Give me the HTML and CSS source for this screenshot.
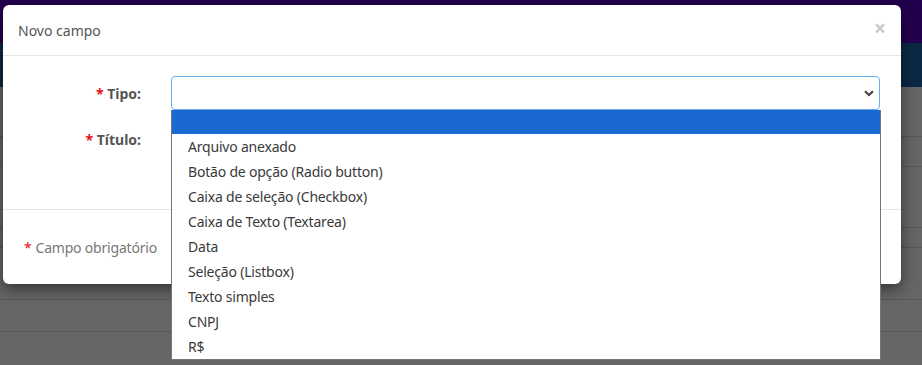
FILE: index.html
```html
<html>
  <head>
    <link rel="stylesheet" href="styles.css">
  </head>
  <body>
    <div class="page">
      <div class="topbar"></div>
      <div class="navbar"></div>
      <div class="rows">
        <div class="row r1"></div>
        <div class="row r2"></div>
        <div class="row r3"></div>
        <div class="row r4"></div>
        <div class="row r5"></div>
        <div class="row r6"></div>
      </div>
    </div>

    <div class="modal">
      <div class="modal-header">
        <span class="modal-title">Novo campo</span>
        <span class="close">&times;</span>
      </div>
      <div class="modal-body">
        <div class="form-row">
          <label class="form-label"><span class="req">*</span> Tipo:</label>
          <div class="select focused">
            <svg class="chevron" width="10" height="7" viewBox="0 0 10 7"><path d="M1 1.2 L5 5 L9 1.2" fill="none" stroke="#444" stroke-width="2.2"/></svg>
          </div>
        </div>
        <div class="form-row">
          <label class="form-label"><span class="req">*</span> Título:</label>
          <div class="select"></div>
        </div>
      </div>
      <div class="modal-footer">
        <span class="req">*</span> Campo obrigatório
      </div>
    </div>

    <ul class="dropdown">
      <li class="selected"></li>
      <li>Arquivo anexado</li>
      <li>Botão de opção (Radio button)</li>
      <li>Caixa de seleção (Checkbox)</li>
      <li>Caixa de Texto (Textarea)</li>
      <li>Data</li>
      <li>Seleção (Listbox)</li>
      <li>Texto simples</li>
      <li>CNPJ</li>
      <li>R$</li>
    </ul>
  </body>
</html>
```

FILE: styles.css
```css
html, body {
  margin: 0;
  width: 100%;
  height: 100%;
  font-family: 'Noto Sans', 'Open Sans', sans-serif;
  overflow: hidden;
}

.page {
  height: 100%;
  background: #666;
}
.topbar {
  height: 43px;
  background: #22004e;
}
.navbar {
  height: 44px;
  background: #0b2944;
}
.row {
  border-bottom: 1px solid #575757;
}
.r1 { height: 49px; }
.r2 { height: 29px; }
.r3 { height: 60px; }
.r4 { height: 19px; }
.r5 { height: 51px; }
.r6 { height: 31px; }

.modal {
  position: absolute;
  left: 3px;
  top: 5px;
  width: 898px;
  background: #fff;
  border-radius: 6px;
  box-shadow: 0 5px 15px rgba(0,0,0,0.5);
}

.modal-header {
  height: 50px;
  padding: 0 15px 0 15px;
  display: flex;
  align-items: center;
  justify-content: space-between;
  border-bottom: 1px solid #e5e5e5;
}
.modal-title {
  font-size: 14px;
  color: #555;
}
.close {
  font-size: 21px;
  font-weight: bold;
  color: #c8c8c8;
  margin-top: -5px;
}

.modal-body {
  padding: 20px 21px 53px 0;
  display: flex;
  flex-direction: column;
  gap: 12px;
}
.form-row {
  display: grid;
  grid-template-columns: 138px 1fr;
  column-gap: 30px;
  align-items: center;
}
.form-label {
  text-align: right;
  font-size: 14px;
  font-weight: bold;
  color: #555;
}
.req {
  color: #e8101a;
}
.select {
  height: 32px;
  border: 1px solid #ccc;
  border-radius: 4px;
  display: flex;
  align-items: center;
  justify-content: flex-end;
  padding-right: 5px;
}
.select.focused {
  border-color: #66afe9;
}

.modal-footer {
  height: 74px;
  border-top: 1px solid #e5e5e5;
  display: flex;
  align-items: center;
  padding-left: 21px;
  font-size: 14px;
  letter-spacing: -0.2px;
  color: #777;
  gap: 4px;
}

.dropdown {
  position: absolute;
  left: 171px;
  top: 110px;
  width: 708px;
  margin: 0;
  padding: 0;
  list-style: none;
  background: #fff;
  border: 1px solid #777;
  border-top: none;
}
.dropdown li {
  height: 25px;
  line-height: 25px;
  padding-left: 16px;
  font-size: 14px;
  letter-spacing: -0.2px;
  color: #3a3a3a;
}
.dropdown li.selected {
  height: 24px;
  background: #1b68d3;
}
```
